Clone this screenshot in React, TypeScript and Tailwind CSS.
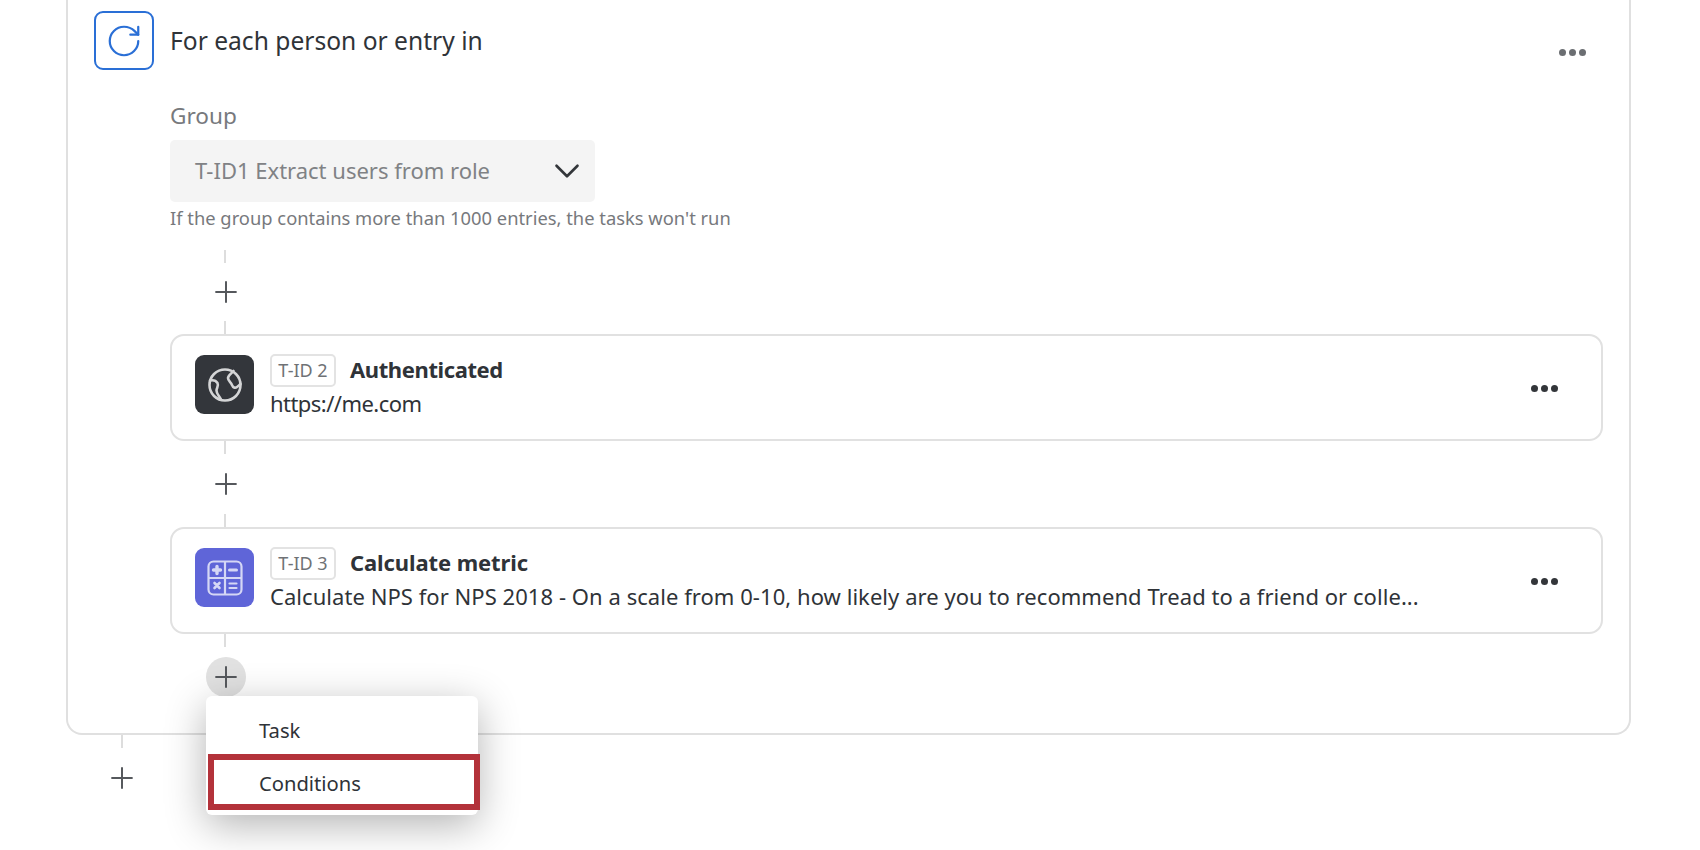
import type { ReactNode } from "react";
import { ChevronDown, Plus, RotateCw } from "lucide-react";

function Dots({ className }: { className: string }) {
  return (
    <div className={`flex gap-[3px] ${className}`}>
      <span className="size-[7px] rounded-full bg-current" />
      <span className="size-[7px] rounded-full bg-current" />
      <span className="size-[7px] rounded-full bg-current" />
    </div>
  );
}

function Connector({ height }: { height: string }) {
  return (
    <div className={`ml-[54px] flex w-[2px] flex-col items-center justify-between ${height}`}>
      <div className="h-[13px] w-[2px] shrink-0 bg-[#dddddd]" />
      <div className="ml-[1px] flex size-[34px] shrink-0 items-center justify-center">
        <Plus className="size-[34px] shrink-0 text-[#55585c]" strokeWidth={1.4} />
      </div>
      <div className="h-[13px] w-[2px] shrink-0 bg-[#dddddd]" />
    </div>
  );
}

function GlobeIcon() {
  return (
    <svg viewBox="0 0 36 36" className="size-[36px]" fill="none" stroke="#d4d5d6" strokeWidth="2.6" strokeLinecap="round" strokeLinejoin="round">
      <circle cx="18" cy="18" r="15.500" />
      <path d="M3 13.500 C5.500 13 9 13.500 10.500 16 C12 19 9.500 21 9.500 23.500 C9.500 27 12.500 29 14 32.500" />
      <path d="M26.500 4 C24.500 6.500 21 8.500 21 11 C21 14 24 15 25 18 C26 20.500 28 21.500 30 20 C31.500 19 32.500 18 33.500 17" />
    </svg>
  );
}

function CalculatorIcon() {
  return (
    <svg viewBox="0 0 36 36" className="size-[36px]" fill="none" stroke="#d5d7f5" strokeWidth="2.2" strokeLinecap="round">
      <rect x="1.500" y="1.500" width="33" height="33" rx="5" />
      <path d="M18 2 V34 M2 18 H34" />
      <path d="M10 6.500 V13.500 M6.500 10 H13.500" strokeWidth="3.400" />
      <path d="M22.500 10 H29.500" strokeWidth="3" />
      <path d="M7.500 23 L12.500 28 M12.500 23 L7.500 28" strokeWidth="2.600" />
      <path d="M22.500 23.500 H29.500 M22.500 28 H29.500" strokeWidth="2.200" />
    </svg>
  );
}

function TaskCard({
  tid,
  title,
  text,
  iconClass,
  icon,
  titleClass,
  textClass,
}: {
  tid: string;
  title: string;
  text: string;
  iconClass: string;
  icon: ReactNode;
  titleClass: string;
  textClass: string;
}) {
  return (
    <div className="flex h-[107px] w-[1433px] items-start rounded-[14px] border-2 border-[#e1e1e1] bg-white pl-[23px] pr-[43px] pt-[18px]">
      <div className={`mt-[1px] flex h-[59px] w-[59px] shrink-0 items-center justify-center rounded-[9px] ${iconClass}`}>
        {icon}
      </div>
      <div className="ml-[16px] min-w-0 flex-1">
        <div className="flex items-start">
          <span className="flex h-[33px] w-[66px] shrink-0 items-center justify-center rounded-[5px] border-2 border-[#e3e3e3] text-[18px] text-[#6f7276]">
            {tid}
          </span>
          <span className={`ml-[14px] text-[22px] font-bold leading-[30px] text-[#2f3338] ${titleClass}`}>{title}</span>
        </div>
        <div className={`truncate text-[22px] leading-[33px] text-[#2f3338] ${textClass}`}>{text}</div>
      </div>
      <Dots className="ml-[40px] mt-[31px] text-[#33363a]" />
    </div>
  );
}

export default function App() {
  return (
    <div className="relative h-[850px] w-[1700px] overflow-hidden bg-white font-['Noto_Sans',sans-serif]">
      <div className="ml-[66px] h-[735px] w-[1565px] rounded-b-[16px] border-x-2 border-b-2 border-[#e0e0e0] pl-[26px] pt-[11px]">
        <div className="flex h-[59px] items-start">
          <div className="flex h-[59px] w-[60px] shrink-0 items-center justify-center rounded-[9px] border-2 border-[#2a6fd6]">
            <RotateCw className="size-[38px] shrink-0 text-[#2a6fd6]" strokeWidth={1.4} />
          </div>
          <h2 className="ml-[16px] mt-[13px] text-[24.6px] leading-[34px] text-[#2f3338]">For each person or entry in</h2>
          <Dots className="ml-auto mr-[43px] mt-[38px] text-[#6b6e72]" />
        </div>

        <div className="ml-[76px]">
          <div className="mt-[31px] text-[22.6px] leading-[30px] text-[#77797d]">Group</div>
          <div className="mt-[9px] flex h-[62px] w-[425px] items-center justify-between rounded-[5px] bg-[#f4f4f4] pl-[25px] pr-[7px]">
            <span className="-mt-[2px] text-[22px] text-[#808285]">T-ID1 Extract users from role</span>
            <ChevronDown className="size-[42px] shrink-0 text-[#33363a]" strokeWidth={1.5} />
          </div>
          <div className="mt-[3px] text-[18.35px] leading-[26px] text-[#77797d]">
            If the group contains more than 1000 entries, the tasks won't run
          </div>

          <div className="mt-[19px]">
            <Connector height="h-[84px]" />
          </div>
          <TaskCard
            tid="T-ID 2"
            title="Authenticated"
            text="https://me.com"
            iconClass="bg-[#33363b]"
            icon={<GlobeIcon />}
            titleClass="tracking-[-0.4px]"
            textClass="tracking-[-0.55px]"
          />
          <Connector height="h-[86px]" />
          <TaskCard
            tid="T-ID 3"
            title="Calculate metric"
            text="Calculate NPS for NPS 2018 - On a scale from 0-10, how likely are you to recommend Tread to a friend or colle..."
            iconClass="bg-[#5f65d8]"
            icon={<CalculatorIcon />}
            titleClass="tracking-[-0.1px]"
            textClass="tracking-[0.05px]"
          />
          <div className="ml-[54px] h-[13px] w-[2px] bg-[#dddddd]" />
        </div>
      </div>

      <div className="ml-[121px] h-[13px] w-[2px] bg-[#dddddd]" />
      <div className="ml-[105px] mt-[13px]">
        <Plus className="size-[34px] text-[#55585c]" strokeWidth={1.4} />
      </div>

      {/* open add-step menu */}
      <div className="absolute left-[206px] top-[657px] flex size-[40px] items-center justify-center rounded-full bg-[#e1e1e1]">
        <Plus className="size-[34px] shrink-0 text-[#55585c]" strokeWidth={1.4} />
      </div>
      <div className="absolute left-[206px] top-[696px] h-[119px] w-[272px] rounded-[6px] bg-white shadow-[0_10px_40px_rgba(0,0,0,0.3)]">
        <div className="flex h-[68px] items-center pl-[53px] text-[20.2px] text-[#2f3338]">Task</div>
        <div className="flex h-[38px] items-center pl-[53px] text-[20.2px] text-[#2f3338]">Conditions</div>
      </div>
      <div className="absolute left-[208px] top-[754px] h-[56px] w-[272px] border-[6px] border-[#b3323a]" />
    </div>
  );
}
